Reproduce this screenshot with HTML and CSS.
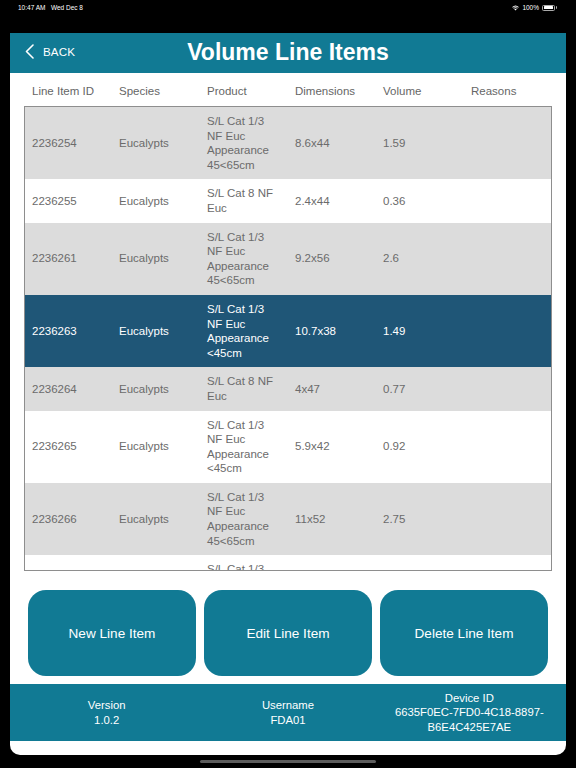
FILE: index.html
```html
<!DOCTYPE html>
<html lang="en">
<head>
<meta charset="utf-8">
<title>Volume Line Items</title>
<link rel="stylesheet" href="styles.css">
</head>
<body>
<div class="status">
  <span class="status-time">10:47 AM&nbsp;&nbsp;&nbsp;Wed Dec 8</span>
  <span class="status-right">
    <svg class="wifi" width="7" height="6" viewBox="0 0 14 11"><path d="M7 10.5 L4.6 7.9 A3.6 3.6 0 0 1 9.4 7.9 Z" fill="#fff"/><path d="M2.6 5.9 A6.4 6.4 0 0 1 11.4 5.9 L10.2 7.2 A4.7 4.7 0 0 0 3.8 7.2 Z" fill="#fff"/><path d="M0.5 3.7 A9.5 9.5 0 0 1 13.5 3.7 L12.3 5 A7.8 7.8 0 0 0 1.7 5 Z" fill="#fff"/></svg>
    <span class="batt-text">100%</span>
    <span class="battery"><span class="battery-fill"></span></span><span class="battery-nub"></span>
  </span>
</div>

<div class="panel">
  <header class="topbar">
    <a class="back">
      <svg width="11" height="15" viewBox="0 0 11 15"><path d="M9 1 L2.5 7.5 L9 14" fill="none" stroke="#fff" stroke-width="1.6" stroke-linecap="round" stroke-linejoin="round"/></svg>
      <span>BACK</span>
    </a>
    <h1 class="title">Volume Line Items</h1>
    <span></span>
  </header>

  <div class="colheads">
    <span>Line Item ID</span><span>Species</span><span>Product</span><span>Dimensions</span><span>Volume</span><span>Reasons</span>
  </div>

  <div class="table">
    <div class="row alt">
      <span>2236254</span><span>Eucalypts</span><span class="prod">S/L Cat 1/3 NF Euc Appearance 45&lt;65cm</span><span>8.6x44</span><span>1.59</span><span></span>
    </div>
    <div class="row">
      <span>2236255</span><span>Eucalypts</span><span class="prod">S/L Cat 8 NF Euc</span><span>2.4x44</span><span>0.36</span><span></span>
    </div>
    <div class="row alt">
      <span>2236261</span><span>Eucalypts</span><span class="prod">S/L Cat 1/3 NF Euc Appearance 45&lt;65cm</span><span>9.2x56</span><span>2.6</span><span></span>
    </div>
    <div class="row selected">
      <span>2236263</span><span>Eucalypts</span><span class="prod">S/L Cat 1/3 NF Euc Appearance &lt;45cm</span><span>10.7x38</span><span>1.49</span><span></span>
    </div>
    <div class="row alt">
      <span>2236264</span><span>Eucalypts</span><span class="prod">S/L Cat 8 NF Euc</span><span>4x47</span><span>0.77</span><span></span>
    </div>
    <div class="row">
      <span>2236265</span><span>Eucalypts</span><span class="prod">S/L Cat 1/3 NF Euc Appearance &lt;45cm</span><span>5.9x42</span><span>0.92</span><span></span>
    </div>
    <div class="row alt">
      <span>2236266</span><span>Eucalypts</span><span class="prod">S/L Cat 1/3 NF Euc Appearance 45&lt;65cm</span><span>11x52</span><span>2.75</span><span></span>
    </div>
    <div class="row partial">
      <span></span><span></span><span class="prod">S/L Cat 1/3</span><span></span><span></span><span></span>
    </div>
  </div>

  <div class="actions">
    <button class="btn">New Line Item</button>
    <button class="btn">Edit Line Item</button>
    <button class="btn">Delete Line Item</button>
  </div>

  <footer class="footer">
    <div class="info">Version<br>1.0.2</div>
    <div class="info">Username<br>FDA01</div>
    <div class="info">Device ID<br>6635F0EC-7FD0-4C18-8897-B6E4C425E7AE</div>
  </footer>
</div>

<div class="home-indicator"></div>
</body>
</html>
```

FILE: styles.css
```css
* { box-sizing: border-box; }

html, body {
  margin: 0;
  padding: 0;
  background: #000;
  font-family: "Liberation Sans", Arial, Helvetica, sans-serif;
}

body {
  width: 576px;
  height: 768px;
  overflow: hidden;
}

.status {
  height: 33px;
  display: flex;
  justify-content: space-between;
  align-items: flex-start;
  padding: 4px 19px 0 18px;
  color: #fff;
  font-size: 6.5px;
  line-height: 7px;
}

.status-right {
  display: flex;
  align-items: center;
  gap: 2px;
}

.wifi { display: block; margin-right: 1px; }

.battery {
  width: 13px;
  height: 6px;
  border: 0.8px solid #aaa;
  border-radius: 1.5px;
  padding: 0.6px;
  display: block;
  margin-left: 1px;
}

.battery-fill {
  display: block;
  width: 100%;
  height: 100%;
  background: #fff;
  border-radius: 0.6px;
}

.battery-nub {
  width: 1px;
  height: 2.5px;
  background: #aaa;
  margin-left: -1px;
  border-radius: 0 1px 1px 0;
}

.panel {
  margin: 0 10px;
  height: 722px;
  background: #fff;
  border-radius: 0 0 10px 10px;
  display: flex;
  flex-direction: column;
  overflow: hidden;
}

.topbar {
  height: 40px;
  background: #117a94;
  display: grid;
  grid-template-columns: 1fr auto 1fr;
  align-items: center;
  color: #fff;
}

.back {
  display: flex;
  align-items: center;
  gap: 8px;
  padding-left: 14px;
  padding-bottom: 2px;
  font-size: 11.6px;
  line-height: 14px;
  letter-spacing: 0.1px;
}

.back svg { display: block; margin-top: -1px; }

.title {
  margin: 0;
  font-size: 23px;
  font-weight: bold;
  line-height: 26px;
  padding-bottom: 3px;
}

.colheads {
  height: 33px;
  margin: 0 14px;
  padding: 11px 0 0 1px;
  display: grid;
  grid-template-columns: 87px 88px 88px 88px 88px 1fr;
  font-size: 11.5px;
  line-height: 14px;
  color: #666;
}

.colheads span { padding-left: 7px; }

.table {
  height: 465px;
  margin: 0 14px;
  border: 1px solid #8e8e8e;
  overflow: hidden;
  background: #fff;
}

.row {
  display: grid;
  grid-template-columns: 87px 88px 88px 88px 88px 1fr;
  align-items: center;
  font-size: 11.5px;
  line-height: 14.6px;
  color: #6b6b6b;
  background: #fff;
}

.row span { padding: 7px 7px; }

.row .prod { padding-right: 12px; }

.row.alt { background: #dcdcdc; }

.row.selected {
  background: #1f5677;
  color: #fff;
}

.actions {
  display: grid;
  grid-template-columns: repeat(3, 1fr);
  gap: 8px;
  padding: 0 18px;
  margin-top: 19px;
  height: 86px;
}

.btn {
  border: none;
  border-radius: 18px;
  background: #117a94;
  color: #fff;
  font-family: inherit;
  font-size: 13.6px;
  padding: 0;
}

.footer {
  margin-top: 8px;
  height: 57px;
  background: #117a94;
  display: grid;
  grid-template-columns: repeat(3, 1fr);
  align-items: center;
  padding: 0 6px;
  color: #fff;
  font-size: 11.3px;
  line-height: 14.4px;
  text-align: center;
}

.info { padding: 0 8px; }

.home-indicator {
  width: 176px;
  height: 3px;
  border-radius: 2px;
  background: #5c5c5c;
  margin: 5px auto 0 200px;
}
```
